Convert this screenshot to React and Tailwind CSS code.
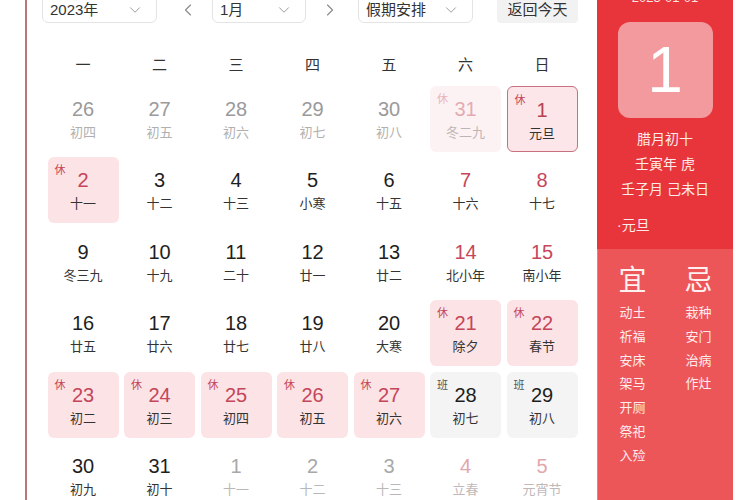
import { ChevronDown, ChevronLeft, ChevronRight } from "lucide-react";

const FONT = { fontFamily: '"Liberation Sans", "Noto Sans CJK SC", sans-serif' };

// kind: prev | next | normal | weekend | rest | work | today | prevRest | nextWeekend
const weeks = [
  [
    { d: 26, l: "初四", k: "prev" },
    { d: 27, l: "初五", k: "prev" },
    { d: 28, l: "初六", k: "prev" },
    { d: 29, l: "初七", k: "prev" },
    { d: 30, l: "初八", k: "prev" },
    { d: 31, l: "冬二九", k: "prevRest" },
    { d: 1, l: "元旦", k: "today" },
  ],
  [
    { d: 2, l: "十一", k: "rest" },
    { d: 3, l: "十二", k: "normal" },
    { d: 4, l: "十三", k: "normal" },
    { d: 5, l: "小寒", k: "normal" },
    { d: 6, l: "十五", k: "normal" },
    { d: 7, l: "十六", k: "weekend" },
    { d: 8, l: "十七", k: "weekend" },
  ],
  [
    { d: 9, l: "冬三九", k: "normal" },
    { d: 10, l: "十九", k: "normal" },
    { d: 11, l: "二十", k: "normal" },
    { d: 12, l: "廿一", k: "normal" },
    { d: 13, l: "廿二", k: "normal" },
    { d: 14, l: "北小年", k: "weekend" },
    { d: 15, l: "南小年", k: "weekend" },
  ],
  [
    { d: 16, l: "廿五", k: "normal" },
    { d: 17, l: "廿六", k: "normal" },
    { d: 18, l: "廿七", k: "normal" },
    { d: 19, l: "廿八", k: "normal" },
    { d: 20, l: "大寒", k: "normal" },
    { d: 21, l: "除夕", k: "rest" },
    { d: 22, l: "春节", k: "rest" },
  ],
  [
    { d: 23, l: "初二", k: "rest" },
    { d: 24, l: "初三", k: "rest" },
    { d: 25, l: "初四", k: "rest" },
    { d: 26, l: "初五", k: "rest" },
    { d: 27, l: "初六", k: "rest" },
    { d: 28, l: "初七", k: "work" },
    { d: 29, l: "初八", k: "work" },
  ],
  [
    { d: 30, l: "初九", k: "normal" },
    { d: 31, l: "初十", k: "normal" },
    { d: 1, l: "十一", k: "next" },
    { d: 2, l: "十二", k: "next" },
    { d: 3, l: "十三", k: "next" },
    { d: 4, l: "立春", k: "nextWeekend" },
    { d: 5, l: "元宵节", k: "nextWeekend" },
  ],
];

const styles = {
  prev: { box: "", num: "text-[#9a9a9a]", lun: "text-[#b0b0b0]" },
  next: { box: "", num: "text-[#a8a8a8]", lun: "text-[#b8b8b8]" },
  nextWeekend: { box: "", num: "text-[#e2a7ae]", lun: "text-[#c0b8b8]" },
  normal: { box: "", num: "text-[#1e1e1e]", lun: "text-[#333]" },
  weekend: { box: "", num: "text-[#c7475a]", lun: "text-[#333]" },
  rest: { box: "bg-[#fce3e6]", num: "text-[#c4465a]", lun: "text-[#333]", tag: "休", tagc: "text-[#c4465a]" },
  prevRest: { box: "bg-[#fdf2f3]", num: "text-[#e4aab2]", lun: "text-[#bdb5b5]", tag: "休", tagc: "text-[#e8b4bb]" },
  today: { box: "bg-[#fce6e9] border border-[#c8707e]", num: "text-[#b8404f]", lun: "text-[#333]", tag: "休", tagc: "text-[#c4465a]" },
  work: { box: "bg-[#f4f4f4]", num: "text-[#1e1e1e]", lun: "text-[#333]", tag: "班", tagc: "text-[#555]" },
};

function Select({ label, w }) {
  return (
    <div
      className={`h-[34px] ${w} flex items-center justify-between pl-[7px] pr-[12px] border border-[#e4e4e4] rounded-[6px] bg-white`}
    >
      <span className="text-[15px] text-[#333] pt-[8px]">{label}</span>
      <ChevronDown size={18} strokeWidth={1.3} className="text-[#999] mt-[8px]" />
    </div>
  );
}

function Cell({ c }) {
  const s = styles[c.k];
  return (
    <div className={`relative h-[66px] rounded-[6px] flex flex-col items-center pt-[11px] ${s.box}`}>
      {s.tag && (
        <span className={`absolute left-[7px] top-[6px] text-[11px] leading-[14px] ${s.tagc}`}>{s.tag}</span>
      )}
      <span className={`text-[20px] leading-[24px] ${s.num}`}>{c.d}</span>
      <span className={`mt-[3px] text-[13px] leading-[18px] ${s.lun}`}>{c.l}</span>
    </div>
  );
}

export default function App() {
  const yi = ["动土", "祈福", "安床", "架马", "开厕", "祭祀", "入殓"];
  const ji = ["栽种", "安门", "治病", "作灶"];

  return (
    <div className="w-[750px] h-[500px] overflow-hidden bg-white flex" style={FONT}>
      <div className="w-[25px] shrink-0" />

      {/* calendar */}
      <div className="w-[572px] shrink-0 border-l-2 border-[#b9777a] flex flex-col">
        <div className="-mt-[11px] flex items-center pl-[15px]">
          <Select label="2023年" w="w-[115px]" />
          <ChevronLeft size={20} strokeWidth={1.3} className="text-[#888] ml-[21px] mt-[8px]" />
          <div className="ml-[14px]">
            <Select label="1月" w="w-[94px]" />
          </div>
          <ChevronRight size={20} strokeWidth={1.3} className="text-[#888] ml-[14px] mt-[8px]" />
          <div className="ml-[18px]">
            <Select label="假期安排" w="w-[115px]" />
          </div>
          <div className="ml-[24px] w-[81px] h-[34px] rounded-[4px] bg-[#f2f2f2] flex items-center justify-center text-[15px] text-[#333] pt-[8px]">
            返回今天
          </div>
        </div>

        <div className="mt-[31px] grid grid-cols-[repeat(7,71px)] gap-x-[5.5px] pl-[20.5px] h-[30px] items-center">
          {["一", "二", "三", "四", "五", "六", "日"].map((w) => (
            <div key={w} className="text-center text-[15px] text-[#333]">
              {w}
            </div>
          ))}
        </div>

        <div className="mt-[9px] grid grid-cols-[repeat(7,71px)] gap-x-[5.5px] gap-y-[5.5px] pl-[20.5px]">
          {weeks.flat().map((c, i) => (
            <Cell key={i} c={c} />
          ))}
        </div>
      </div>

      {/* red side panel */}
      <div className="w-[136px] shrink-0 flex flex-col">
        <div className="h-[249px] bg-[#e7353b] flex flex-col items-center">
          <div className="-mt-[9px] h-[14px] text-[13px] leading-[14px] text-[#ffe4e4]">2023-01-01</div>
          <div className="mt-[17px] w-[95px] h-[96px] rounded-[12px] bg-[#f29a9d] flex items-center justify-center">
            <span className="text-[64px] leading-none text-white font-light">1</span>
          </div>
          <div className="mt-[9px] text-[14px] leading-[25px] text-[#ffeaea] text-center">
            <div>腊月初十</div>
            <div>壬寅年 虎</div>
            <div>壬子月 己未日</div>
          </div>
          <div className="self-start mt-[11px] pl-[20px] text-[14px] leading-[25px] text-[#ffeaea]">·元旦</div>
        </div>

        <div className="flex-1 bg-[#ed5659] border-l border-[#f27a7c] flex justify-center gap-[38px] pt-[14px]">
          <div className="flex flex-col items-center">
            <div className="text-[28px] leading-[36px] text-[#fff0f0]">宜</div>
            <div className="mt-[2px] flex flex-col">
              {yi.map((t) => (
                <div key={t} className="text-[13px] leading-[23.8px] text-[#ffecec]">
                  {t}
                </div>
              ))}
            </div>
          </div>
          <div className="flex flex-col items-center">
            <div className="text-[28px] leading-[36px] text-[#fff0f0]">忌</div>
            <div className="mt-[2px] flex flex-col">
              {ji.map((t) => (
                <div key={t} className="text-[13px] leading-[23.8px] text-[#ffecec]">
                  {t}
                </div>
              ))}
            </div>
          </div>
        </div>
      </div>

      <div className="flex-1" />
    </div>
  );
}
